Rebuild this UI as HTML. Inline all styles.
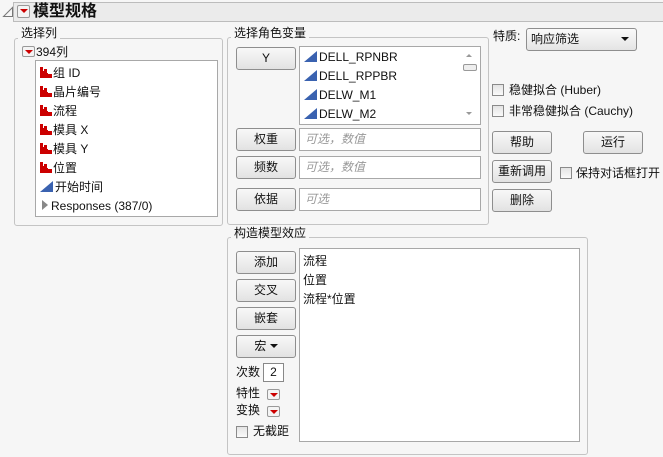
<!DOCTYPE html>
<html><head><meta charset="utf-8"><style>
*{box-sizing:border-box;margin:0;padding:0}
body{width:663px;height:457px;background:#f6f6f6;font-family:"Liberation Sans","Noto Sans CJK SC",sans-serif;font-size:12px;color:#111;position:relative;overflow:hidden}
.a{position:absolute;white-space:nowrap}
.grp{position:absolute;border:1px solid #c4c4c4;border-radius:3px}
.gl{position:absolute;background:#f6f6f6;padding:0 3px;font-size:12px;line-height:14px}
.btn{position:absolute;width:60px;height:23px;border:1px solid #8e8e8e;border-radius:3px;background:linear-gradient(#f8f8f8,#e2e2e2);text-align:center;line-height:21px;font-size:12px}
.box{position:absolute;background:#fff;border:1px solid #a8a8a8}
.ph{color:#999;font-style:italic;padding-left:5px;line-height:20px}
.cb{position:absolute;width:12px;height:12px;border:1px solid #8a8a8a;background:linear-gradient(#e4e4e4,#fafafa)}
.rb{position:absolute;width:13px;height:11px;border:1px solid #999;border-radius:2px;background:#f4f4f4}
.rb:after{content:"";position:absolute;left:2px;top:3px;border-left:4px solid transparent;border-right:4px solid transparent;border-top:4px solid #c00}
.it{position:absolute;left:4px;line-height:19px}
.bar{display:inline-block;width:12px;height:11px;vertical-align:-1px;margin-right:1px;background:#c00;clip-path:polygon(0 0,3px 0,3px 4px,4px 4px,4px 2px,7px 2px,7px 6px,8px 6px,8px 7px,12px 7px,12px 11px,0 11px)}
.tri{display:inline-block;width:0;height:0;border-left:13px solid transparent;border-bottom:11px solid #3a62b0;vertical-align:-1px;margin-right:2px}
</style></head><body>
<svg class="a" style="left:2px;top:6px" width="12" height="12"><path d="M10.5 1.5 L10.5 10.5 L1.5 10.5 Z" fill="none" stroke="#777" stroke-width="1"/></svg>
<div class="a" style="left:13px;top:2px;width:652px;height:20px;background:#ebebeb;border:1px solid #bcbcbc"></div>
<div class="rb" style="left:17px;top:5px;width:13px;height:13px"></div>
<div class="a" style="left:33px;top:2px;font-size:16px;font-weight:bold;line-height:20px">模型规格</div>

<div class="grp" style="left:14px;top:38px;width:209px;height:188px"></div>
<div class="gl" style="left:18px;top:26px">选择列</div>
<div class="rb" style="left:22px;top:46px"></div>
<div class="a" style="left:36px;top:44px;line-height:16px">394列</div>
<div class="box" style="left:35px;top:60px;width:183px;height:157px">
<div class="it" style="top:3px"><span class="bar"></span>组 ID</div>
<div class="it" style="top:22px"><span class="bar"></span>晶片编号</div>
<div class="it" style="top:41px"><span class="bar"></span>流程</div>
<div class="it" style="top:60px"><span class="bar"></span>模具 X</div>
<div class="it" style="top:79px"><span class="bar"></span>模具 Y</div>
<div class="it" style="top:98px"><span class="bar"></span>位置</div>
<div class="it" style="top:117px"><span class="tri"></span>开始时间</div>
<div class="it" style="top:136px;left:6px"><span style="display:inline-block;width:0;height:0;border-top:5px solid transparent;border-bottom:5px solid transparent;border-left:6px solid #888;margin-right:3px"></span>Responses (387/0)</div>
</div>

<div class="grp" style="left:227px;top:37px;width:262px;height:188px"></div>
<div class="gl" style="left:231px;top:26px">选择角色变量</div>
<div class="btn" style="left:236px;top:47px">Y</div>
<div class="box" style="left:299px;top:46px;width:182px;height:79px">
<div class="it" style="top:1px"><span class="tri"></span>DELL_RPNBR</div>
<div class="it" style="top:20px"><span class="tri"></span>DELL_RPPBR</div>
<div class="it" style="top:39px"><span class="tri"></span>DELW_M1</div>
<div class="it" style="top:58px"><span class="tri"></span>DELW_M2</div>
<div class="a" style="left:162px;top:0;width:18px;height:77px;background:#fff"></div>
<div class="a" style="left:166px;top:7px;border-left:3px solid transparent;border-right:3px solid transparent;border-bottom:3px solid #999"></div>
<div class="a" style="left:163px;top:17px;width:14px;height:7px;border:1px solid #999;border-radius:2px;background:#eee"></div>
<div class="a" style="left:166px;top:65px;border-left:3px solid transparent;border-right:3px solid transparent;border-top:3px solid #999"></div>
</div>
<div class="btn" style="left:236px;top:128px">权重</div>
<div class="box ph" style="left:299px;top:128px;width:182px;height:23px">可选，数值</div>
<div class="btn" style="left:236px;top:156px">频数</div>
<div class="box ph" style="left:299px;top:156px;width:182px;height:23px">可选，数值</div>
<div class="btn" style="left:236px;top:188px">依据</div>
<div class="box ph" style="left:299px;top:188px;width:182px;height:23px">可选</div>

<div class="a" style="left:493px;top:28px;line-height:16px">特质:</div>
<div class="a" style="left:526px;top:28px;width:111px;height:23px;border:1px solid #8e8e8e;border-radius:3px;background:linear-gradient(#fafafa,#e4e4e4);padding-left:4px;line-height:21px">响应筛选</div>
<div class="a" style="left:621px;top:37px;border-left:4px solid transparent;border-right:4px solid transparent;border-top:4px solid #111"></div>
<div class="cb" style="left:492px;top:84px"></div>
<div class="a" style="left:509px;top:82px;line-height:16px">稳健拟合 (Huber)</div>
<div class="cb" style="left:492px;top:105px"></div>
<div class="a" style="left:509px;top:103px;line-height:16px">非常稳健拟合 (Cauchy)</div>
<div class="btn" style="left:492px;top:131px">帮助</div>
<div class="btn" style="left:583px;top:131px">运行</div>
<div class="btn" style="left:492px;top:160px">重新调用</div>
<div class="cb" style="left:560px;top:167px"></div>
<div class="a" style="left:576px;top:165px;line-height:16px">保持对话框打开</div>
<div class="btn" style="left:492px;top:189px">删除</div>

<div class="grp" style="left:227px;top:237px;width:361px;height:218px"></div>
<div class="gl" style="left:231px;top:226px">构造模型效应</div>
<div class="btn" style="left:236px;top:251px">添加</div>
<div class="btn" style="left:236px;top:279px">交叉</div>
<div class="btn" style="left:236px;top:307px">嵌套</div>
<div class="btn" style="left:236px;top:335px">宏 <span style="display:inline-block;border-left:4px solid transparent;border-right:4px solid transparent;border-top:4px solid #111;vertical-align:2px"></span></div>
<div class="a" style="left:236px;top:364px;line-height:16px">次数</div>
<div class="a" style="left:263px;top:363px;width:21px;height:19px;background:#fff;border:1px solid #888;text-align:center;line-height:17px">2</div>
<div class="a" style="left:236px;top:385px;line-height:16px">特性</div>
<div class="rb" style="left:267px;top:389px"></div>
<div class="a" style="left:236px;top:402px;line-height:16px">变换</div>
<div class="rb" style="left:267px;top:406px"></div>
<div class="cb" style="left:236px;top:426px"></div>
<div class="a" style="left:253px;top:423px;line-height:16px">无截距</div>
<div class="box" style="left:299px;top:248px;width:281px;height:194px">
<div class="it" style="top:3px;left:3px">流程</div>
<div class="it" style="top:22px;left:3px">位置</div>
<div class="it" style="top:41px;left:3px">流程*位置</div>
</div>
</body></html>
